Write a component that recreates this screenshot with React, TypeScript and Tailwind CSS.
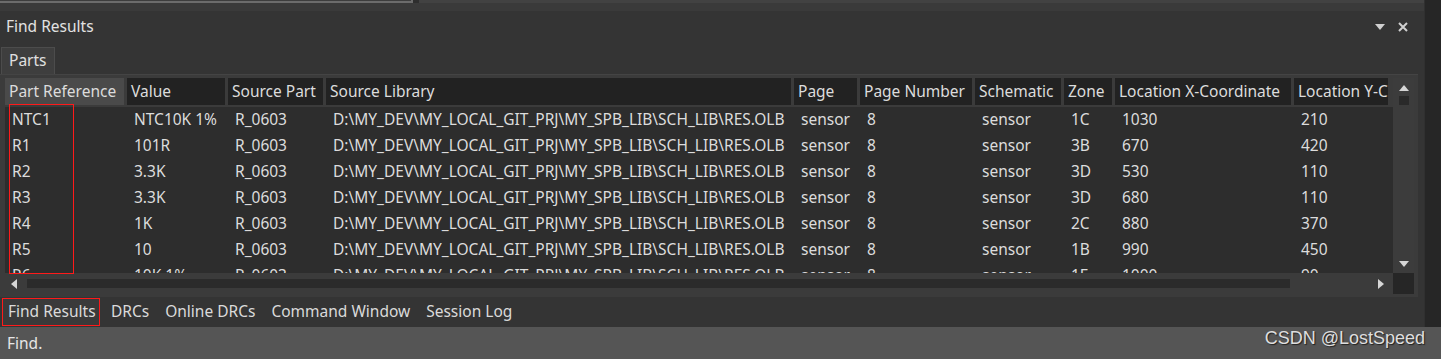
import React from "react";

const font = { fontFamily: '"Noto Sans", "Open Sans", "Noto Sans CJK SC", sans-serif' };

const cols = [
  { name: "Part Reference", w: 119 },
  { name: "Value", w: 98 },
  { name: "Source Part", w: 95 },
  { name: "Source Library", w: 465 },
  { name: "Page", w: 63 },
  { name: "Page Number", w: 112 },
  { name: "Schematic", w: 86 },
  { name: "Zone", w: 48 },
  { name: "Location X-Coordinate", w: 176 },
  { name: "Location Y-Coordinate", w: 99 },
];

const lib = "D:\\MY_DEV\\MY_LOCAL_GIT_PRJ\\MY_SPB_LIB\\SCH_LIB\\RES.OLB";

const rows: string[][] = [
  ["NTC1", "NTC10K 1%", "R_0603", lib, "sensor", "8", "sensor", "1C", "1030", "210"],
  ["R1", "101R", "R_0603", lib, "sensor", "8", "sensor", "3B", "670", "420"],
  ["R2", "3.3K", "R_0603", lib, "sensor", "8", "sensor", "3D", "530", "110"],
  ["R3", "3.3K", "R_0603", lib, "sensor", "8", "sensor", "3D", "680", "110"],
  ["R4", "1K", "R_0603", lib, "sensor", "8", "sensor", "2C", "880", "370"],
  ["R5", "10", "R_0603", lib, "sensor", "8", "sensor", "1B", "990", "450"],
  ["R6", "10K 1%", "R_0603", lib, "sensor", "8", "sensor", "1E", "1000", "90"],
];

function Tri({ dir }: { dir: "up" | "down" | "left" | "right" }) {
  const pts = {
    up: "0,6 5,0 10,6",
    down: "0,0 10,0 5,6",
    left: "6,0 6,10 0,5",
    right: "0,0 6,5 0,10",
  }[dir];
  const vb = dir === "up" || dir === "down" ? "0 0 10 6" : "0 0 6 10";
  const size = dir === "up" || dir === "down" ? "w-[10px] h-[6px]" : "w-[6px] h-[10px]";
  return (
    <svg viewBox={vb} className={size}>
      <polygon points={pts} fill="#d6d6d6" />
    </svg>
  );
}

export default function App() {
  return (
    <div
      className="w-[1441px] h-[359px] overflow-hidden bg-[#333333] flex flex-col text-[15.5px] text-[#dcdcdc]"
      style={font}
    >
      <div className="flex h-[327px]">
        <div className="w-[1424px] flex flex-col bg-[#343434]">
          {/* top strip */}
          <div className="h-[11px] flex flex-col bg-[#3a3a3a]">
            <div className="h-[3px] flex">
              <div className="w-[413px] border-b-[2px] border-r-[2px] border-[#6c6c6c] bg-[#3d3d3d]" />
              <div className="w-[6px] bg-[#2e2e2e]" />
              <div className="flex-1 bg-[#424242]" />
            </div>
          </div>
          {/* title */}
          <div className="h-[32px] flex items-center justify-between pl-[6px] pr-[16px]">
            <span className="leading-none text-[#e2e2e2]">Find Results</span>
            <div className="flex items-center gap-[13px]">
              <svg viewBox="0 0 10 6" className="w-[10px] h-[6px]">
                <polygon points="0,0 10,0 5,6" fill="#d0d0d0" />
              </svg>
              <svg viewBox="0 0 10 10" className="w-[10px] h-[10px]">
                <path d="M1 1 L9 9 M9 1 L1 9" stroke="#d0d0d0" strokeWidth="2" />
              </svg>
            </div>
          </div>
          {/* tab row */}
          <div className="h-[31px] flex items-end pl-[1px]">
            <div className="h-[27px] px-[7px] flex items-center bg-[#3e3e3e] border-t border-l border-r border-[#4c4c4c] leading-none text-[#e0e0e0]">
              Parts
            </div>
          </div>
          {/* table frame */}
          <div className="w-[1418px] h-[223px] bg-[#3b3b3b] border-t border-[#444444] pt-[3px] pl-[5px] flex flex-col">
            <div className="flex h-[195px]">
              <div className="w-[1388px] flex flex-col relative">
                <div className="flex flex-col overflow-hidden">
                  {/* header */}
                  <div className="h-[27px] flex gap-[3px] shrink-0">
                    {cols.map((c, i) => (
                      <div
                        key={c.name}
                        className={`shrink-0 h-full flex items-center pl-[4px] overflow-hidden whitespace-nowrap leading-none ${
                          i === 0 ? "bg-[#4a4a4a]" : "bg-[#222222]"
                        }`}
                        style={{ width: i === cols.length - 1 ? 94 : c.w }}
                      >
                        {c.name}
                      </div>
                    ))}
                  </div>
                  {/* body */}
                  <div className="mt-[2px] h-[166px] bg-[#2d2d2d] overflow-hidden">
                    {rows.map((r, ri) => (
                      <div key={ri} className="h-[26px] flex gap-[3px] items-center">
                        {r.map((v, ci) => (
                          <div
                            key={ci}
                            className="shrink-0 pl-[7px] whitespace-nowrap overflow-hidden leading-none"
                            style={{ width: cols[ci].w }}
                          >
                            {v}
                          </div>
                        ))}
                      </div>
                    ))}
                  </div>
                </div>
                <div className="absolute left-[4px] top-[26px] w-[65px] h-[170px] border border-[#ff1a1a]" />
              </div>
              {/* vertical scrollbar */}
              <div className="w-[21px] bg-[#3c3c3c] flex flex-col items-center pt-[7px] pb-[6px]">
                <Tri dir="up" />
                <div className="mt-[5px] w-[10px] h-[9px] bg-[#2a2a2a]" />
                <div className="flex-1" />
                <Tri dir="down" />
              </div>
            </div>
            {/* horizontal scrollbar */}
            <div className="h-[21px] flex items-center">
              <div className="w-[1388px] h-full flex items-center pl-[6px] pr-[9px]">
                <Tri dir="left" />
                <div className="ml-[10px] w-[1263px] h-[9px] bg-[#2b2b2b]" />
                <div className="flex-1" />
                <Tri dir="right" />
              </div>
              <div className="w-[21px] h-[21px] bg-[#262626]" />
            </div>
          </div>
          {/* bottom tabs */}
          <div className="flex items-center h-[29px] pl-[2px] text-[#dadada]">
            <div className="h-[28px] w-[98px] border border-[#ff1a1a] bg-[#3a3a3a] flex items-center pl-[5px] leading-none whitespace-nowrap">
              Find Results
            </div>
            <span className="ml-[11px] leading-none">DRCs</span>
            <span className="ml-[16px] leading-none">Online DRCs</span>
            <span className="ml-[16px] leading-none">Command Window</span>
            <span className="ml-[16px] leading-none">Session Log</span>
          </div>
        </div>
        <div className="flex-1 bg-[#262626] border-l border-[#303030]" />
      </div>
      {/* status bar */}
      <div className="h-[32px] bg-[#555555] flex items-start justify-between pl-[7px] pr-[16px]">
        <span className="mt-[9px] leading-none text-[#e6e6e6]">Find.</span>
        <span
          className="mt-[2px] text-[18px] leading-none text-[#dedede]"
          style={{ fontFamily: '"Liberation Sans", Arial, sans-serif', textShadow: "1px 1px 1px #222" }}
        >
          CSDN @LostSpeed
        </span>
      </div>
    </div>
  );
}
